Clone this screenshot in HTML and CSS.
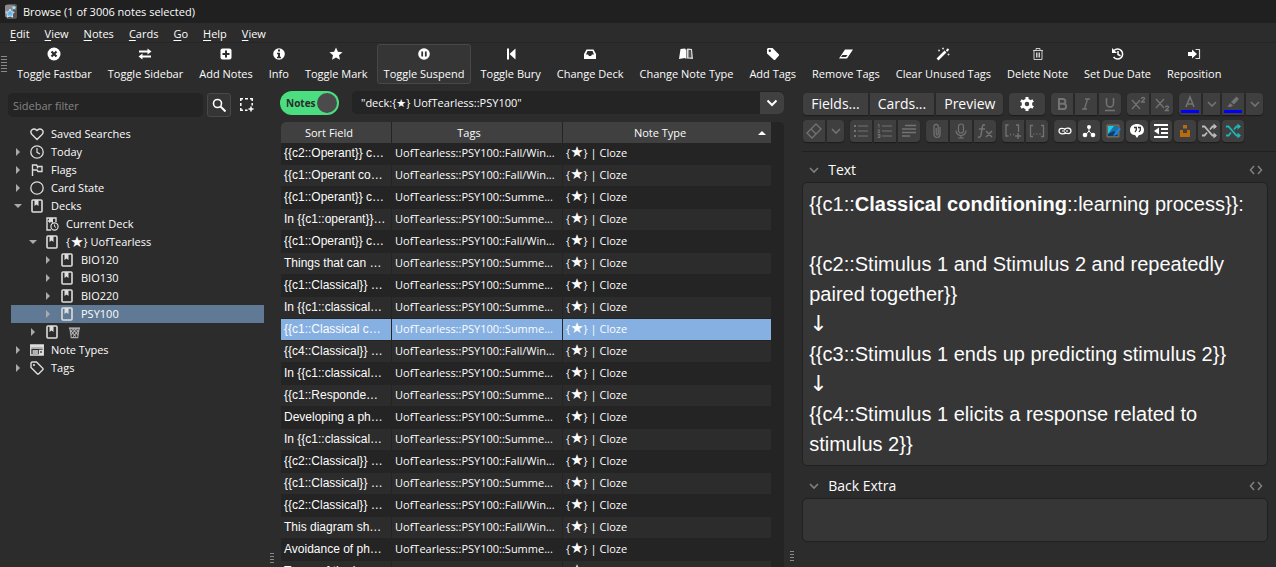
FILE: index.html
```
<!DOCTYPE html>
<html lang="en">
    <head>
        <meta charset="utf-8">
        <title>Browse (1 of 3006 notes selected)</title>
        <link rel="stylesheet" href="styles.css">
    </head>
    <body>
        <!-- shared icons -->
        <svg class="defs" aria-hidden="true">
            <symbol id="i-right" viewBox="0 0 8 8"><path d="M2 0l4 4-4 4z" fill="currentColor"/></symbol>
            <symbol id="i-open" viewBox="0 0 8 8"><path d="M0 2h8L4 6z" fill="currentColor"/></symbol>
            <symbol id="i-chev" viewBox="0 0 12 12"><path d="M2 4l4 4 4-4" fill="none" stroke="currentColor" stroke-width="1.6"/></symbol>
            <symbol id="i-deck" viewBox="0 0 14 14"><rect x="2" y="1" width="10" height="12" rx="1" fill="none" stroke="currentColor" stroke-width="1.6"/><path d="M4.500 1h4v6l-2-1.600-2 1.600z" fill="currentColor"/></symbol>
            <symbol id="i-code" viewBox="0 0 14 10"><path d="M5 1L1.500 5 5 9M9 1l3.500 4L9 9" fill="none" stroke="currentColor" stroke-width="1.500"/></symbol>
            <symbol id="i-shuffle" viewBox="0 0 16 16"><path d="M1 3.500h2.500l8 9H15M1 12.500h2.500l2.500-3M9 6.500l2.500-3H15" fill="none" stroke="currentColor" stroke-width="1.800"/><path d="M12.500.5L16 3.500l-3.500 3zM12.500 9.500l3.500 3-3.500 3z" fill="currentColor"/></symbol>
        </svg>

        <div class="titlebar">
            <svg class="app-icon" viewBox="0 0 12 15"><rect x="1" width="11" height="15" rx="2" fill="#555"/><rect y="1" width="8" height="12" rx="1" fill="#8a8a8a"/><path d="M5 5l1.300 2.800 3 .4-2.200 2 .6 3L5 11.700l-2.700 1.500.6-3-2.200-2 3-.4z" fill="#5db2ee" stroke="#e5f4ff" stroke-width=".8"/><path d="M9 1l.8 1.600 1.700.2-1.200 1.200.3 1.700L9 4.900l-1.500.8.3-1.700-1.200-1.200 1.700-.2z" fill="#a9dcfb"/></svg>
            <span>Browse (1 of 3006 notes selected)</span>
        </div>
        <div class="menubar">
            <button><u>E</u>dit</button>
            <button><u>V</u>iew</button>
            <button><u>N</u>otes</button>
            <button><u>C</u>ards</button>
            <button><u>G</u>o</button>
            <button><u>H</u>elp</button>
            <button><u>V</u>iew</button>
        </div>
        <div class="toolbar">
            <span class="grip grip-wide"></span>
            <button class="tool"><svg viewBox="0 0 14 14"><circle cx="7" cy="7" r="6.500" fill="#fff"/><path d="M4.500 4.500l5 5M9.500 4.500l-5 5" stroke="#2d2d2d" stroke-width="2.200"/></svg>Toggle Fastbar</button>
            <button class="tool"><svg viewBox="0 0 14 14"><path d="M1 4.500h9M4 9.500h9" stroke="#fff" stroke-width="1.800"/><path d="M9.500 1.500l4 3-4 3zM4.500 6.500l-4 3 4 3z" fill="#fff"/></svg>Toggle Sidebar</button>
            <button class="tool"><svg viewBox="0 0 14 14"><rect x="1.500" y="1.500" width="11" height="11" rx="2" fill="#fff"/><path d="M7 3.500v7M3.500 7h7" stroke="#2d2d2d" stroke-width="2"/></svg>Add Notes</button>
            <button class="tool"><svg viewBox="0 0 14 14"><circle cx="7" cy="7" r="5.800" fill="#fff"/><path d="M6 2.500h2v2H6zM5 5.800h3v4h1v1.400H5V9.800h1V7.200H5z" fill="#2d2d2d"/></svg>Info</button>
            <button class="tool"><svg viewBox="0 0 14 14"><path d="M7 .5l1.900 4.200 4.600.5L10 8.200l1 4.600-4-2.400-4 2.400 1-4.600L.5 5.200l4.600-.5z" fill="#fff"/></svg>Toggle Mark</button>
            <button class="tool tool-active"><svg viewBox="0 0 14 14"><circle cx="7" cy="7" r="5.800" fill="#fff"/><path d="M5.200 4.500v5M8.800 4.500v5" stroke="#353535" stroke-width="1.800"/></svg>Toggle Suspend</button>
            <button class="tool"><svg viewBox="0 0 14 14"><path d="M3 1.500h2v11H3zM11.500 1.500v11L5.500 7z" fill="#fff"/></svg>Toggle Bury</button>
            <button class="tool"><svg viewBox="0 0 14 14"><path fill-rule="evenodd" d="M3.500 2.500h7L13 7v5H1V7zM4.500 4L3 7.500h2L6 9h2l1-1.500h2L9.500 4z" fill="#fff"/></svg>Change Deck</button>
            <button class="tool"><svg viewBox="0 0 14 14"><path d="M1.500 2L6 1.500 7 3v9l-1-1-6 1z" fill="#fff"/><path d="M7.500 2.500l1-1 4.500.5 1 10-6-.5-.5.500z" fill="#ddd"/><path d="M9.500 3h2.500l.5 7.500H9.500z" fill="#555"/></svg>Change Note Type</button>
            <button class="tool"><svg viewBox="0 0 14 14"><path fill-rule="evenodd" d="M1 2l1-1h4.500L13 7.500v1L9 13H8L1 6.500zM3.800 2.600a1.200 1.200 0 100 2.400 1.200 1.200 0 000-2.400z" fill="#fff"/></svg>Add Tags</button>
            <button class="tool"><svg viewBox="0 0 14 14"><path fill-rule="evenodd" d="M6 2.500h8l-6 9H0zM3.500 8l-1.500 2h5L8.500 8z" fill="#fff"/></svg>Remove Tags</button>
            <button class="tool"><svg viewBox="0 0 14 14"><path d="M1.500 12.500l8-8" stroke="#fff" stroke-width="2.600"/><path d="M10.500 4l2-2" stroke="#fff" stroke-width="2"/><path d="M2 3.500h2M3 2.500v2M6 1.500h2M7 .5v2M11.500 7.500h2M12.500 6.500v2" stroke="#ccc"/></svg>Clear Unused Tags</button>
            <button class="tool"><svg viewBox="0 0 14 14"><path d="M2 3.500h10M5 3V1.500h4V3M3 3.500v9h8v-9M5.500 5.500v5M7 5.500v5M8.500 5.500v5" fill="none" stroke="#ccc"/></svg>Delete Note</button>
            <button class="tool"><svg viewBox="0 0 14 14"><path d="M3 3.600A5 5 0 112.600 10M7 4v3.500l2.500 1.200" fill="none" stroke="#fff" stroke-width="1.500"/><path d="M1 1v5h5z" fill="#fff"/></svg>Set Due Date</button>
            <button class="tool"><svg viewBox="0 0 14 14"><path d="M1 5h4V2.500L10 7l-5 4.500V9H1z" fill="#fff"/><path d="M8.500 2.500H12.500v9H8.500" fill="none" stroke="#ddd" stroke-width="1.200"/></svg>Reposition</button>
        </div>

        <div class="main">
            <div class="sidebar">
                <div class="filter-row">
                    <input class="filter" type="text" placeholder="Sidebar filter" aria-label="Sidebar filter">
                    <button class="icon-btn icon-btn-on" aria-label="Search"><svg viewBox="0 0 14 14"><circle cx="5.500" cy="5.500" r="4" fill="none" stroke="#fff" stroke-width="1.600"/><path d="M8.500 8.500l5 5" stroke="#fff" stroke-width="2"/></svg></button>
                    <button class="icon-btn" aria-label="Select"><svg viewBox="0 0 14 14"><path d="M.8 3V.8H3M5 .8h3M10 .8h2.200V3M12.200 5v2.500M.8 5v3M.8 10v2.200H3M5 12.200h2.500M11 8.500v5M8.500 11h5" fill="none" stroke="#fff" stroke-width="1.500"/></svg></button>
                </div>
                <div class="tree">
                    <div class="node"><span class="arrow"></span><svg class="node-icon" viewBox="0 0 14 14"><path d="M7 12.500L2 7.500C-1 4 3.500-.5 7 3.500c3.500-4 8 .5 5 4z" fill="none" stroke="currentColor" stroke-width="1.400"/></svg>Saved Searches</div>
                    <div class="node"><span class="arrow"><svg><use href="#i-right"/></svg></span><svg class="node-icon" viewBox="0 0 14 14"><circle cx="7" cy="7" r="6.200" fill="none" stroke="currentColor" stroke-width="1.300"/><path d="M7 3v4.300l3 1.700" fill="none" stroke="currentColor" stroke-width="1.200"/></svg>Today</div>
                    <div class="node"><span class="arrow"><svg><use href="#i-right"/></svg></span><svg class="node-icon" viewBox="0 0 14 14"><path d="M2.500 13V2h4l1 1.500H12v5H8L7 7H2.500M7.500 3.500v2" fill="none" stroke="currentColor" stroke-width="1.400"/></svg>Flags</div>
                    <div class="node"><span class="arrow"><svg><use href="#i-right"/></svg></span><svg class="node-icon" viewBox="0 0 14 14"><circle cx="7" cy="7" r="6.200" fill="none" stroke="currentColor" stroke-width="1.300"/></svg>Card State</div>
                    <div class="node"><span class="arrow"><svg><use href="#i-open"/></svg></span><svg class="node-icon"><use href="#i-deck"/></svg>Decks</div>
                    <div class="node level-1"><span class="arrow"></span><svg class="node-icon" viewBox="0 0 14 14"><path d="M6 13H2V1h9v4M3 4h3" fill="none" stroke="currentColor" stroke-width="1.400"/><path d="M4 1h4v5L6 5 4 6z" fill="currentColor"/><circle cx="9.500" cy="9.500" r="3.600" fill="none" stroke="currentColor" stroke-width="1.200"/><path d="M9.500 7.500v2l1.500 1" fill="none" stroke="currentColor"/></svg>Current Deck</div>
                    <div class="node level-1"><span class="arrow"><svg><use href="#i-open"/></svg></span><svg class="node-icon"><use href="#i-deck"/></svg>{<span class="star">★</span>} UofTearless</div>
                    <div class="node level-2"><span class="arrow"><svg><use href="#i-right"/></svg></span><svg class="node-icon"><use href="#i-deck"/></svg>BIO120</div>
                    <div class="node level-2"><span class="arrow"><svg><use href="#i-right"/></svg></span><svg class="node-icon"><use href="#i-deck"/></svg>BIO130</div>
                    <div class="node level-2"><span class="arrow"><svg><use href="#i-right"/></svg></span><svg class="node-icon"><use href="#i-deck"/></svg>BIO220</div>
                    <div class="node level-2 node-selected"><span class="arrow"><svg><use href="#i-right"/></svg></span><svg class="node-icon"><use href="#i-deck"/></svg>PSY100</div>
                    <div class="node level-1"><span class="arrow"><svg><use href="#i-right"/></svg></span><svg class="node-icon"><use href="#i-deck"/></svg><svg class="node-icon bin" viewBox="0 0 14 14"><path d="M1 2h12v2H1z" fill="#aaa"/><path d="M2 3l1.500 10h7L12 3M2.500 5l6 7M5.500 4l5 6M9 4l2 3M11.500 5l-6 7M8.500 4l-5 6M5 4L3 7" fill="none" stroke="#aaa" stroke-width="1.200"/></svg></div>
                    <div class="node"><span class="arrow"><svg><use href="#i-right"/></svg></span><svg class="node-icon" viewBox="0 0 14 14"><path d="M.7 2h12.600v10H.7zM.7 5h12.600M2.500 8H8M2.500 10H8M9.500 7.500h3v3h-3z" fill="none" stroke="currentColor" stroke-width="1.300"/><path d="M.7 2h12.600v2H.7z" fill="currentColor"/></svg>Note Types</div>
                    <div class="node"><span class="arrow"><svg><use href="#i-right"/></svg></span><svg class="node-icon" viewBox="0 0 14 14"><path d="M1 2l1-1h4.500L13 7.500v1L8.500 13h-1L1 6.500z" fill="none" stroke="currentColor" stroke-width="1.400"/><circle cx="4" cy="4" r="1.100" fill="currentColor"/></svg>Tags</div>
                </div>
                <span class="grip grip-foot"></span>
            </div>

            <div class="browser">
                <div class="search-row">
                    <label class="switch"><input type="checkbox" checked><span>Notes</span></label>
                    <div class="search">
                        <input type="text" value="&quot;deck:{★} UofTearless::PSY100&quot;" aria-label="Search">
                        <button aria-label="History"><svg viewBox="0 0 12 12"><path d="M1.500 3.500L6 8l4.500-4.500" fill="none" stroke="#fff" stroke-width="2"/></svg></button>
                    </div>
                </div>
                <div class="table-box">
                    <table class="notes">
                        <colgroup><col class="col-sort"><col class="col-tags"><col></colgroup>
                        <thead>
                            <tr><th><span class="sort-label">Sort Field</span></th><th>Tags</th><th>Note Type<svg class="sort" viewBox="0 0 8 4"><path d="M0 4l4-4 4 4z" fill="#fff"/></svg></th></tr>
                        </thead>
                        <tbody>
                            <tr><td>{{c2::Operant}} c…</td><td>UofTearless::PSY100::Fall/Win...</td><td>{<span class="star">★</span>} | Cloze</td></tr>
                            <tr><td>{{c1::Operant co…</td><td>UofTearless::PSY100::Fall/Win...</td><td>{<span class="star">★</span>} | Cloze</td></tr>
                            <tr><td>{{c1::Operant}} c…</td><td>UofTearless::PSY100::Summe...</td><td>{<span class="star">★</span>} | Cloze</td></tr>
                            <tr><td>In {{c1::operant}}…</td><td>UofTearless::PSY100::Summe...</td><td>{<span class="star">★</span>} | Cloze</td></tr>
                            <tr><td>{{c1::Operant}} c…</td><td>UofTearless::PSY100::Fall/Win...</td><td>{<span class="star">★</span>} | Cloze</td></tr>
                            <tr><td>Things that can …</td><td>UofTearless::PSY100::Summe...</td><td>{<span class="star">★</span>} | Cloze</td></tr>
                            <tr><td>{{c1::Classical}} …</td><td>UofTearless::PSY100::Summe...</td><td>{<span class="star">★</span>} | Cloze</td></tr>
                            <tr><td>In {{c1::classical…</td><td>UofTearless::PSY100::Summe...</td><td>{<span class="star">★</span>} | Cloze</td></tr>
                            <tr class="selected"><td>{{c1::Classical c…</td><td>UofTearless::PSY100::Summe...</td><td>{<span class="star">★</span>} | Cloze</td></tr>
                            <tr><td>{{c4::Classical}} …</td><td>UofTearless::PSY100::Fall/Win...</td><td>{<span class="star">★</span>} | Cloze</td></tr>
                            <tr><td>In {{c1::classical…</td><td>UofTearless::PSY100::Summe...</td><td>{<span class="star">★</span>} | Cloze</td></tr>
                            <tr><td>{{c1::Responde…</td><td>UofTearless::PSY100::Summe...</td><td>{<span class="star">★</span>} | Cloze</td></tr>
                            <tr><td>Developing a ph…</td><td>UofTearless::PSY100::Summe...</td><td>{<span class="star">★</span>} | Cloze</td></tr>
                            <tr><td>In {{c1::classical…</td><td>UofTearless::PSY100::Summe...</td><td>{<span class="star">★</span>} | Cloze</td></tr>
                            <tr><td>{{c2::Classical}} …</td><td>UofTearless::PSY100::Fall/Win...</td><td>{<span class="star">★</span>} | Cloze</td></tr>
                            <tr><td>{{c1::Classical}} …</td><td>UofTearless::PSY100::Summe...</td><td>{<span class="star">★</span>} | Cloze</td></tr>
                            <tr><td>{{c2::Classical}} …</td><td>UofTearless::PSY100::Fall/Win...</td><td>{<span class="star">★</span>} | Cloze</td></tr>
                            <tr><td>This diagram sh…</td><td>UofTearless::PSY100::Fall/Win...</td><td>{<span class="star">★</span>} | Cloze</td></tr>
                            <tr><td>Avoidance of ph…</td><td>UofTearless::PSY100::Summe...</td><td>{<span class="star">★</span>} | Cloze</td></tr>
                            <tr><td>Types of the b…</td><td>UofTearless::PSY100::Summe...</td><td>{<span class="star">★</span>} | Cloze</td></tr>
                        </tbody>
                    </table>
                </div>
            </div>

            <div class="editor">
                <div class="edit-bar">
                    <div class="group">
                        <button class="key key-text">Fields...</button>
                        <button class="key key-text">Cards...</button>
                        <button class="key key-text">Preview</button>
                    </div>
                    <div class="group">
                        <button class="key key-wide on" aria-label="Options"><svg viewBox="0 0 16 16"><circle cx="8" cy="8" r="3.800" fill="none" stroke="currentColor" stroke-width="3"/><path d="M8 1v3M8 12v3M1.900 4.500l2.600 1.500M11.500 10l2.600 1.500M1.900 11.500L4.500 10M11.500 6l2.600-1.500" stroke="currentColor" stroke-width="3"/></svg></button>
                    </div>
                    <div class="group">
                        <button class="key" aria-label="Bold"><svg viewBox="0 0 16 16"><path d="M5 3h4a2.300 2.300 0 010 4.800H5zM5 7.800h4.500a2.600 2.600 0 010 5.200H5z" fill="none" stroke="currentColor" stroke-width="2"/></svg></button>
                        <button class="key" aria-label="Italic"><svg viewBox="0 0 16 16"><path d="M7 3h5M4 13h5M9.500 3l-3 10" fill="none" stroke="currentColor" stroke-width="1.300"/></svg></button>
                        <button class="key" aria-label="Underline"><svg viewBox="0 0 16 16"><path d="M4.500 2v5.500a3.500 3.500 0 007 0V2M3 14.500h10" fill="none" stroke="currentColor" stroke-width="1.500"/></svg></button>
                    </div>
                    <div class="group">
                        <button class="key" aria-label="Superscript"><svg viewBox="0 0 16 16"><path d="M2 4l8 9M10 4l-8 9M11.500 3c0-2 3.500-2 3 0L11.500 6H15" fill="none" stroke="currentColor" stroke-width="1.300"/></svg></button>
                        <button class="key" aria-label="Subscript"><svg viewBox="0 0 16 16"><path d="M2 3l8 9M10 3l-8 9M11.500 11.500c0-2 3.500-2 3 0l-3 3H15" fill="none" stroke="currentColor" stroke-width="1.300"/></svg></button>
                    </div>
                    <div class="group">
                        <button class="key" aria-label="Text color"><svg class="ink" viewBox="0 0 18 18"><path d="M5 12L9 2l4 10M6.500 9h5" fill="none" stroke="currentColor" stroke-width="1.600"/><path d="M0 15h18v3H0z" fill="#00f"/></svg></button>
                        <button class="key key-drop" aria-label="Pick text color"><svg><use href="#i-chev"/></svg></button>
                        <button class="key" aria-label="Highlight"><svg class="ink" viewBox="0 0 18 18"><path d="M7 7l5.500-5.500 2.500 2.500L10 9.500zM6 8l3 2.500L7 12H3.500z" fill="currentColor"/><path d="M0 15h18v3H0z" fill="#00f"/></svg></button>
                        <button class="key key-drop" aria-label="Pick highlight"><svg><use href="#i-chev"/></svg></button>
                    </div>
                </div>
                <div class="edit-bar">
                    <div class="group">
                        <button class="key" aria-label="Clear formatting"><svg viewBox="0 0 16 16"><path d="M10 1l5 5-9 9-5-5zM5 6l5 5" fill="none" stroke="currentColor" stroke-width="1.300"/></svg></button>
                        <button class="key key-drop" aria-label="Formatting options"><svg><use href="#i-chev"/></svg></button>
                    </div>
                    <div class="group">
                        <button class="key" aria-label="Bullets"><svg viewBox="0 0 16 16"><path d="M5 3h10M5 8h10M5 13h10" stroke="currentColor" stroke-width="1.200"/><path d="M1 2h2v2H1zM1 7h2v2H1zM1 12h2v2H1z" fill="currentColor"/></svg></button>
                        <button class="key" aria-label="Numbering"><svg viewBox="0 0 16 16"><path d="M5 3h10M5 8h10M5 13h10M1 1.500h1v3M.5 7H3L1 9.500h2M.5 11.500H3v3H.5M1 13h2" fill="none" stroke="currentColor"/></svg></button>
                        <button class="key" aria-label="Alignment"><svg viewBox="0 0 16 16"><path d="M4 2.500h11M1 6h14M1 9.500h14M1 13h8" stroke="currentColor" stroke-width="1.300"/></svg></button>
                    </div>
                    <div class="group">
                        <button class="key" aria-label="Attach"><svg viewBox="0 0 16 16"><path d="M11 4v7.500a3 3 0 01-6 0V3.500a2 2 0 014.200 0V11a1 1 0 01-2 0V5" fill="none" stroke="currentColor" stroke-width="1.200"/></svg></button>
                        <button class="key" aria-label="Record"><svg viewBox="0 0 16 16"><rect x="5.500" y="1" width="5" height="9" rx="2.500" fill="none" stroke="currentColor" stroke-width="1.200"/><path d="M3 7.500a5 5 0 0010 0M8 12.500V15M5 15h6" fill="none" stroke="currentColor" stroke-width="1.200"/></svg></button>
                        <button class="key" aria-label="Equations"><svg viewBox="0 0 16 16"><path d="M8 2C5.500 1 5.500 3 5 6L4 12c-.3 2-1.500 2.500-3 2M2 6h6M9 8l6 6M15 8l-6 6" fill="none" stroke="currentColor" stroke-width="1.500"/></svg></button>
                    </div>
                    <div class="group">
                        <button class="key" aria-label="New cloze"><svg viewBox="0 0 16 16"><path d="M3.500 2H1v11h2.500M11 2h2.500v7M5 11.500h1M8 11.500h1M13 10v6M10 13h6" fill="none" stroke="currentColor" stroke-width="1.300"/></svg></button>
                        <button class="key" aria-label="Same cloze"><svg viewBox="0 0 16 16"><path d="M4 2.500H1.500v11H4M12 2.500h2.500v11H12M4.500 11h1M7.500 11h1M10.500 11h1" fill="none" stroke="currentColor" stroke-width="1.300"/></svg></button>
                    </div>
                    <div class="group group-loose">
                        <button class="key on" aria-label="Link"><svg viewBox="0 0 16 16"><path d="M9 9.500C7 11.500 2 11.500 2 8s5-3 6.500-1M7 6.500C9 4.500 14 4.500 14 8s-5 3-6.500 1M5 8h3M9 8h2" fill="none" stroke="currentColor" stroke-width="1.200"/></svg></button>
                        <button class="key on" aria-label="Hierarchy"><svg viewBox="0 0 16 16"><path d="M8 4v4L4.500 12M8 8l3.500 4" fill="none" stroke="currentColor"/><circle cx="8" cy="4" r="2" fill="currentColor"/><circle cx="4" cy="12" r="2.300" fill="currentColor"/><circle cx="12" cy="12" r="2.300" fill="currentColor"/></svg></button>
                        <button class="key on" aria-label="Image occlusion"><svg viewBox="0 0 16 16"><path d="M2 2h12v12H2z" fill="#1d6fa5" stroke="#9a6b3d"/><path d="M3 3h6L3 11z" fill="#1cc8e4"/><path d="M3 11l6-3 4 5H3z" fill="#103b63"/><path d="M8 13l1-2 5-6 2 1-5 6z" fill="#1788e8"/></svg></button>
                        <button class="key on" aria-label="Quote"><svg viewBox="0 0 16 16"><path d="M1 7c0-8 14-8 14 0 0 4-3 5-5 5l-2 3-2-3c-2 0-5-1-5-5z" fill="currentColor"/><path d="M5 4.500h2.300V7L6 9M9 4.500h2.300V7L10 9" fill="none" stroke="#333" stroke-width="1.300"/></svg></button>
                        <button class="key on" aria-label="Outdent"><svg viewBox="0 0 16 16"><path d="M1 2h14M8 6h7M8 10h7M1 14h14" stroke="currentColor" stroke-width="2"/><path d="M6 4.500v7L1 8z" fill="currentColor"/></svg></button>
                        <button class="key on" aria-label="Export"><svg viewBox="0 0 16 16"><path d="M3 7h3v3h4V7h3v7H3zM6 2h4v3.500H6z" fill="#b96a0c"/></svg></button>
                        <button class="key on" aria-label="Shuffle"><svg class="gray"><use href="#i-shuffle"/></svg></button>
                        <button class="key on" aria-label="Shuffle all"><svg class="teal"><use href="#i-shuffle"/></svg></button>
                    </div>
                </div>
                <div class="fields">
                    <div class="field-head"><svg class="fold"><use href="#i-chev"/></svg><span>Text</span><svg class="code"><use href="#i-code"/></svg></div>
                    <div class="field" contenteditable="true" role="textbox" aria-label="Text">{{c1::<b>Classical conditioning</b>::learning process}}:<br><br>{{c2::Stimulus 1 and Stimulus 2 and repeatedly paired together}}<br><span class="down">↓</span><br>{{c3::Stimulus 1 ends up predicting stimulus 2}}<br><span class="down">↓</span><br>{{c4::Stimulus 1 elicits a response related to stimulus 2}}</div>
                    <div class="field-head"><svg class="fold"><use href="#i-chev"/></svg><span>Back Extra</span><svg class="code"><use href="#i-code"/></svg></div>
                    <div class="field" contenteditable="true" role="textbox" aria-label="Back Extra"></div>
                </div>
                <span class="grip grip-foot"></span>
            </div>
        </div>
    </body>
</html>
```
FILE: styles.css
```
* {
    box-sizing: border-box;
}
body {
    margin: 0;
    height: 100vh;
    display: flex;
    flex-direction: column;
    overflow: hidden;
    background-color: #2c2c2c;
    color: #fcfcfc;
    font-family: "Open Sans", "Noto Sans", "DejaVu Sans", sans-serif;
    font-size: 11px;
    line-height: 18px;
}
button, input {
    font: inherit;
    color: inherit;
    border: none;
    background: none;
    padding: 0;
    margin: 0;
}
svg {
    display: block;
    flex: none;
}
.defs {
    position: absolute;
    width: 0;
    height: 0;
}
.titlebar {
    height: 23px;
    flex: none;
    display: flex;
    align-items: center;
    gap: 6px;
    padding-left: 5px;
    background-color: #202020;
}
.app-icon {
    width: 12px;
    height: 15px;
}
.menubar {
    height: 20px;
    flex: none;
    display: flex;
    align-items: center;
    gap: 15px;
    padding: 2px 10px 0;
    border-bottom: 1px solid #252525;
}
.menubar u {
    text-underline-offset: 2px;
}
.toolbar {
    flex: none;
    display: flex;
    align-items: center;
    gap: 2px;
    height: 42px;
}
.tool {
    height: 40px;
    display: flex;
    flex-direction: column;
    align-items: center;
    gap: 4px;
    padding: 2px 6px 0;
    border: 1px solid transparent;
    border-radius: 3px;
    white-space: nowrap;
}
.tool svg {
    width: 14px;
    height: 14px;
}
.tool-active {
    background-color: #353535;
    border-color: #484848;
}
.grip {
    width: 4px;
    height: 13px;
    background-image: radial-gradient(circle, #8a8a8a 35%, transparent 40%);
    background-size: 2px 3px;
}
.grip-wide {
    width: 6px;
    height: 18px;
    margin: 0 1px;
}
.grip-foot {
    position: absolute;
    left: 0;
    bottom: 4px;
}
.main {
    flex: 1;
    min-height: 0;
    display: grid;
    grid-template-columns: 272px 16fr 15fr;
}
.sidebar {
    position: relative;
    padding: 8px 8px 0;
}
.sidebar .grip-foot {
    left: auto;
    right: -2px;
    bottom: 2px;
}
.filter-row {
    display: flex;
    gap: 4px;
}
.filter {
    width: 195px;
    height: 24px;
    padding: 0 5px;
    border-radius: 5px;
    background-color: #242424;
}
.filter::placeholder {
    color: #858585;
}
.icon-btn {
    width: 24px;
    height: 24px;
    display: flex;
    align-items: center;
    justify-content: center;
    border: 1px solid transparent;
    border-radius: 3px;
}
.icon-btn-on {
    background-color: #353535;
    border-color: #484848;
}
.icon-btn svg {
    width: 14px;
    height: 14px;
}
.tree {
    padding: 8px 0 0 3px;
}
.node {
    height: 18px;
    display: flex;
    align-items: center;
    white-space: nowrap;
}
.level-1 {
    padding-left: 15px;
}
.level-2 {
    padding-left: 30px;
}
.node-selected {
    background-color: #607a96;
}
.arrow {
    width: 19px;
    padding-left: 3px;
    color: #aaa;
}
.arrow svg {
    width: 8px;
    height: 8px;
}
.node-icon {
    width: 14px;
    height: 14px;
    margin-right: 7px;
    color: #ddd;
}
.bin {
    width: 13px;
    margin-left: 2px;
}
.star {
    font-family: "DejaVu Sans", sans-serif;
    font-size: 15px;
    line-height: 1;
}
.browser {
    min-width: 0;
    display: flex;
    flex-direction: column;
    padding: 6px 6px 0 8px;
    min-height: 0;
}
.search-row {
    flex: none;
    display: flex;
    gap: 13px;
    height: 31px;
}
.switch {
    width: 59px;
    height: 24px;
    display: flex;
    align-items: center;
    justify-content: space-between;
    flex-direction: row-reverse;
    padding: 0 2px 0 6px;
    border-radius: 12px;
    background-color: #4ade80;
    color: #2c2c2c;
    font-size: 10px;
    font-weight: bold;
}
.switch input {
    appearance: none;
    width: 20px;
    height: 20px;
    border-radius: 50%;
    background-color: #4b4b4b;
}
.search {
    flex: 1;
    display: flex;
    align-items: center;
    height: 23px;
    border-radius: 5px;
    background-color: #242424;
    overflow: hidden;
}
.search input {
    flex: 1;
    min-width: 0;
    padding: 0 9px;
}
.search button {
    width: 24px;
    height: 22px;
    background-color: #404040;
    border-radius: 0 5px 5px 0;
}
.search button svg {
    width: 12px;
    height: 12px;
    margin: auto;
}
.table-box {
    flex: 1;
    min-height: 0;
    overflow: hidden;
    margin-left: 1px;
    padding-right: 13px;
    border-radius: 5px 5px 0 0;
    background-color: #242424;
}
.notes {
    width: 100%;
    table-layout: fixed;
    border-collapse: separate;
    border-spacing: 0;
}
.col-sort {
    width: 111px;
}
.col-tags {
    width: 171px;
}
.notes th {
    height: 21px;
    padding: 0;
    font-weight: normal;
    background-color: #404040;
    border-right: 1px solid #242424;
    position: relative;
}
.sort-label {
    padding-right: 14px;
}
.notes th:nth-child(2) {
    padding-right: 16px;
}
.notes th:last-child, .notes td:last-child {
    border-right: none;
}
.notes th:last-child {
    padding-right: 14px;
}
.sort {
    position: absolute;
    right: 5px;
    top: 9px;
    width: 8px;
    height: 4px;
}
.notes td {
    height: 22px;
    padding: 0 3px 2px;
    white-space: nowrap;
    overflow: hidden;
    border-right: 1px solid #242424;
    border-bottom: 1px solid #242424;
}
.notes td:first-child {
    font-family: "Liberation Sans", Arial, sans-serif;
    font-size: 12px;
}
.notes tbody tr:nth-child(even) td {
    background-color: #2c2c2c;
}
.notes .selected td {
    background-color: #86b0e2;
}
.editor {
    position: relative;
    min-width: 0;
    padding: 8px 0 0 12px;
    font-size: 14px;
}
.edit-bar {
    display: flex;
    gap: 6px;
    padding: 0 0 5px 1px;
}
.group {
    display: flex;
    gap: 2px;
}
.key {
    width: 22px;
    height: 22px;
    display: flex;
    align-items: center;
    justify-content: center;
    background-color: #3f3f3f;
    color: #737373;
    box-shadow: 0 1px 1px #1c1c1c;
}
.key svg {
    width: 16px;
    height: 16px;
}
.key .ink {
    width: 18px;
    height: 18px;
}
.group .key:first-child {
    border-top-left-radius: 4px;
    border-bottom-left-radius: 4px;
}
.group .key:last-child {
    border-top-right-radius: 4px;
    border-bottom-right-radius: 4px;
}
.group-loose .key {
    border-radius: 4px;
}
.key-text {
    width: auto;
    padding: 0 8px;
    color: #fcfcfc;
}
.key-wide {
    width: 36px;
}
.key-drop {
    width: 17px;
}
.key-drop svg {
    width: 12px;
    height: 12px;
}
.on {
    color: #fff;
}
.on .gray {
    color: #bbb;
}
.on .teal {
    color: #1fb5b5;
}
.fields {
    margin-top: 4px;
    padding-right: 8px;
    border-top: 1px solid #202020;
    padding-top: 5px;
}
.field-head {
    display: flex;
    align-items: center;
    height: 25px;
    padding: 0 5px 0 6px;
}
.fold {
    width: 12px;
    height: 12px;
    margin-right: 8px;
    color: #808080;
}
.code {
    width: 14px;
    height: 10px;
    margin-left: auto;
    color: #808080;
}
.field {
    min-height: 43px;
    margin-bottom: 7px;
    padding: 6px;
    border: 1px solid #202020;
    border-radius: 5px;
    background-color: #363636;
    font-family: "Liberation Sans", Arial, sans-serif;
    font-size: 20px;
    line-height: 30px;
}
.down {
    font-family: "DejaVu Sans", sans-serif;
    font-size: 22px;
    line-height: 1;
}
```
